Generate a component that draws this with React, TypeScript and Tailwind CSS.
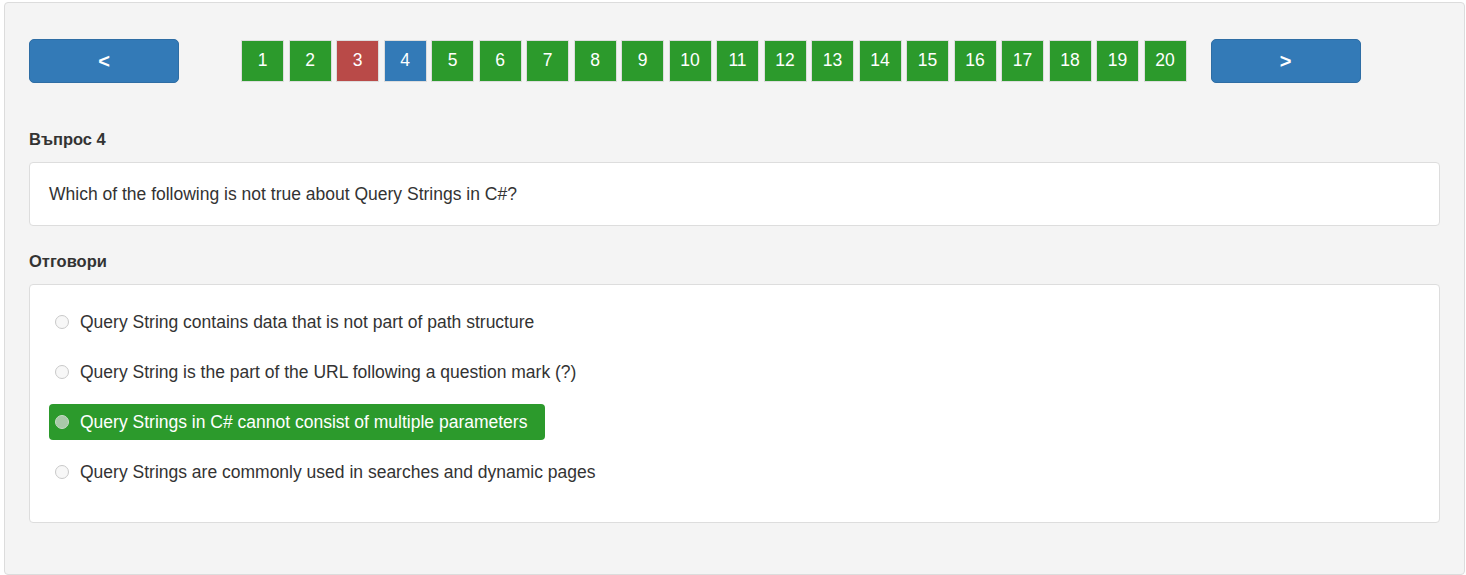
const pages = Array.from({ length: 20 }, (_, i) => i + 1);

const answers = [
  "Query String contains data that is not part of path structure",
  "Query String is the part of the URL following a question mark (?)",
  "Query Strings in C# cannot consist of multiple parameters",
  "Query Strings are commonly used in searches and dynamic pages",
];

const pageColor = (n: number) => {
  if (n === 3) return "bg-[#b94a48]";
  if (n === 4) return "bg-[#337ab7]";
  return "bg-[#2c9a2c]";
};

const App = () => {
  return (
    <div className="h-[575px] bg-white pt-[2px] pl-[4px] pr-[1px] font-['Liberation_Sans',Arial,sans-serif] text-[#333]">
      <div className="h-[573px] rounded border border-[#dcdcdc] bg-[#f4f4f4] px-[24px] pt-[36px]">
        {/* pager */}
        <div className="flex items-center h-[44px]">
          <button className="w-[150px] h-[44px] rounded-[5px] bg-[#337ab7] border border-[#2e6da4] text-white text-[20px] font-bold leading-none">
            &lt;
          </button>
          <div className="ml-[62px] flex gap-[4.5px]">
            {pages.map((n) => (
              <div
                key={n}
                className={`w-[43px] h-[42px] flex items-center justify-center border border-[#ddd] text-white text-[17.5px] pb-[1px] ${pageColor(n)}`}
              >
                {n}
              </div>
            ))}
          </div>
          <button className="ml-[24px] w-[150px] h-[44px] rounded-[5px] bg-[#337ab7] border border-[#2e6da4] text-white text-[20px] font-bold leading-none">
            &gt;
          </button>
        </div>

        <h3 className="mt-[45px] mb-[12px] h-[22px] leading-[22px] text-[16.5px] font-bold">Въпрос 4</h3>
        <div className="rounded border border-[#dddddd] bg-white px-[19px] py-[20px] text-[17.5px] leading-[22px]">
          Which of the following is not true about Query Strings in C#?
        </div>

        <h3 className="mt-[24px] mb-[12px] h-[22px] leading-[22px] text-[16.5px] font-bold">Отговори</h3>
        <div className="rounded border border-[#dddddd] bg-white px-[19px] pt-[19px] pb-[32px] h-[239px]">
          <div className="flex flex-col items-start gap-[14px]">
            {answers.map((a, i) => {
              const selected = i === 2;
              return (
                <label
                  key={a}
                  className={`flex items-center h-[36px] rounded-[4px] pl-[6px] pr-[18px] text-[17.5px] ${
                    selected ? "bg-[#2c9a2c] text-white" : ""
                  }`}
                >
                  <span
                    className={`w-[14px] h-[14px] rounded-full border ${
                      selected ? "bg-[#a9c9a9] border-[#c8dcc8]" : "bg-[#f7f7f7] border-[#c9c9c9]"
                    }`}
                  />
                  <span className="ml-[11px]">{a}</span>
                </label>
              );
            })}
          </div>
        </div>
      </div>
    </div>
  );
};

export default App;
